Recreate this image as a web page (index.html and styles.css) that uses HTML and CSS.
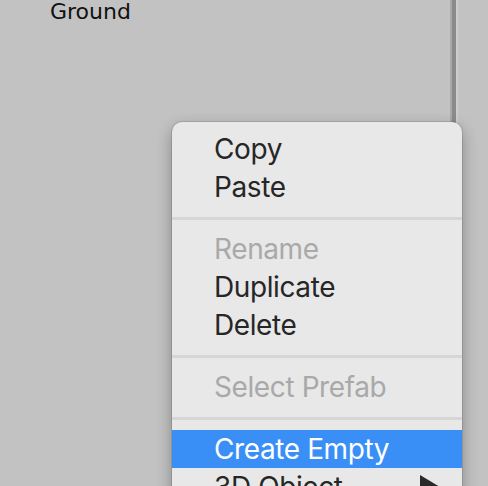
FILE: index.html
```html
<!DOCTYPE html>
<html>
<head>
<meta charset="utf-8">
<link rel="stylesheet" href="styles.css">
</head>
<body>
<div class="window">
  <div class="hierarchy">
    <div class="row">Ground</div>
  </div>
  <div class="splitter"></div>
  <div class="side"></div>
</div>
<div class="menu">
  <div class="item">Copy</div>
  <div class="item">Paste</div>
  <div class="sep"></div>
  <div class="item disabled">Rename</div>
  <div class="item">Duplicate</div>
  <div class="item">Delete</div>
  <div class="sep"></div>
  <div class="item disabled">Select Prefab</div>
  <div class="sep"></div>
  <div class="item active">Create Empty</div>
  <div class="item sub">3D Object<span class="arrow"></span></div>
</div>
</body>
</html>
```
FILE: styles.css
```css
html, body {
  margin: 0;
  padding: 0;
  width: 488px;
  height: 486px;
  overflow: hidden;
  background: #c2c2c2;
}
.window {
  display: flex;
  height: 486px;
}
.hierarchy {
  width: 450px;
}
.row {
  font-family: "DejaVu Sans", sans-serif;
  font-size: 22px;
  line-height: 24px;
  color: #111;
  padding-left: 50px;
  padding-top: 0px;
}
.splitter {
  width: 8px;
  background: linear-gradient(to right, #a9a9a9 0, #a9a9a9 2px, #8b8b8b 2px, #8b8b8b 6px, #cdcdcd 6px);
}
.side {
  flex: 1;
}
.menu {
  position: absolute;
  left: 172px;
  top: 122px;
  width: 290px;
  height: 400px;
  background: #e8e8e8;
  border-radius: 10px;
  padding-top: 8px;
  box-sizing: border-box;
  box-shadow: 0 0 0 1px rgba(0,0,0,0.10), 0 6px 16px rgba(0,0,0,0.32);
  font-family: "Inter", "Roboto", sans-serif;
  font-size: 28px;
  letter-spacing: -0.4px;
}
.item {
  height: 38px;
  line-height: 38px;
  padding-left: 42px;
  color: #262626;
  position: relative;
}
.item.disabled {
  color: #a9a9a9;
}
.item.active {
  background: #3a8ff6;
  color: #fff;
}
.sep {
  height: 24px;
  display: flex;
  align-items: center;
}
.sep::after {
  content: "";
  display: block;
  width: 100%;
  height: 3px;
  background: #d6d6d6;
}
.arrow {
  position: absolute;
  left: 248px;
  top: 7px;
  width: 0;
  height: 0;
  border-top: 12px solid transparent;
  border-bottom: 12px solid transparent;
  border-left: 20px solid #2a2a2a;
}
```
